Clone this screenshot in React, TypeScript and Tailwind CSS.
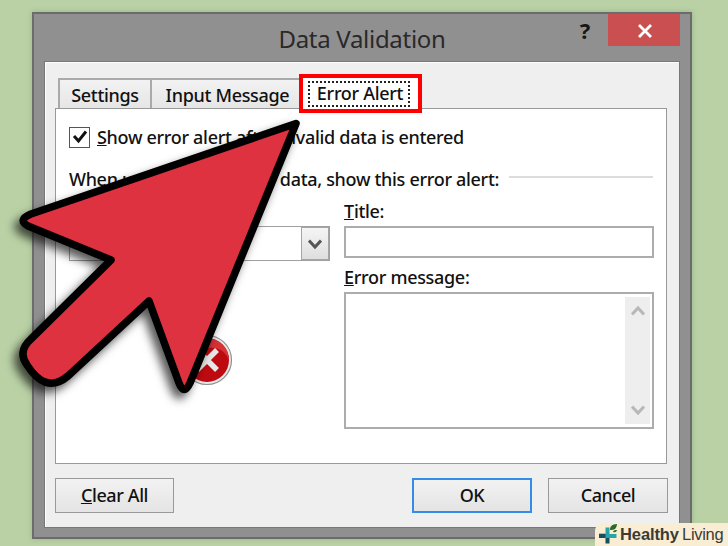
import type { ReactNode } from 'react';
import clsx from 'clsx';

function DialogButton({ children, primary, className }: { children: ReactNode; primary?: boolean; className?: string }) {
  return (
    <button
      className={clsx(
        'h-[35px] bg-linear-to-b from-[#f2f2f2] to-[#e4e4e4] pb-0.5 text-[18px] font-medium tracking-[-0.4px]',
        primary ? 'border-2 border-[#358ce8]' : 'border border-[#999]',
        className
      )}
    >
      {children}
    </button>
  );
}

function Chevron({ up, className }: { up?: boolean; className?: string }) {
  return (
    <svg viewBox="0 0 14 12" className={clsx('h-3 w-3.5', className)} fill="none" stroke="currentColor" strokeWidth="3">
      <path d={up ? 'M1 9.5 7 3l6 6.5' : 'M1 2.5 7 9l6-6.5'} />
    </svg>
  );
}

function StopIcon() {
  return (
    <svg viewBox="0 0 52 52" className="h-[52px] w-[52px]">
      <circle cx="26" cy="26" r="24.5" fill="#e9e9e9" stroke="#909090" strokeWidth="1.2" />
      <circle cx="26" cy="26" r="22" fill="#bd0a10" />
      <path d="M4 26a22 22 0 0 1 44 0q-6-14-22-12T4 26" fill="#d73238" />
      <path d="m16 16 20 20M36 16 16 36" stroke="#e8e8e8" strokeWidth="5.5" />
    </svg>
  );
}

function PointerArrow() {
  return (
    <svg viewBox="0 0 728 546" className="pointer-events-none absolute inset-0 h-[546px] w-[728px]">
      <defs>
        <filter id="shadow" x="-20%" y="-20%" width="140%" height="140%">
          <feDropShadow dx="-5" dy="6" stdDeviation="5" floodColor="#000" floodOpacity="0.65" />
        </filter>
      </defs>
      <path
        d="M296 123.500 31 214Q17 220 28 226L111 260 31 339C21 348 21 357 27 365C38 382 51 390 68 376L149 301 179 383Q184 396 190 383Z"
        fill="#df3040"
        stroke="#000"
        strokeWidth="7.5"
        strokeLinejoin="round"
        filter="url(#shadow)"
      />
    </svg>
  );
}

function Watermark() {
  return (
    <div className="absolute right-0 bottom-0 flex h-[23px] w-[133px] items-center rounded-tl-lg bg-[#f9edd4] pl-1 font-['Liberation_Sans',sans-serif] text-[16.5px] leading-none tracking-[-0.1px] whitespace-nowrap text-[#3c3a36]">
      <svg viewBox="0 0 20 22" className="-mt-0.5 h-[22px] w-5 shrink-0">
        <path d="M6.5 4.5h4v6.5H7L6.5 10z" fill="#27a5a9" />
        <path d="M0 10.5h6.5l4 .5h7v4h-7l-4 0H0z" fill="#27a5a9" />
        <path d="M0 11h6.5v4H0zM6.5 15h4v5.5h-4z" fill="#17505a" />
        <path d="M11 7c0-4 2-5.500 7-6-.5 5-2.500 6-7 6" fill="#296a28" />
        <path d="M14 9c1-2 2-2 4-2-.5 2-2 2.500-4 2" fill="#296a28" />
      </svg>
      <b className="ml-px w-[60px]">Healthy</b>
      <span className="ml-0.5 tracking-[-0.3px]">Living</span>
    </div>
  );
}

export default function App() {
  return (
    <div className="relative h-[546px] w-[728px] overflow-hidden bg-[#b9d1a5] pt-3 pl-8 font-['Noto_Sans','Open_Sans',sans-serif] text-[18px] leading-6 font-medium tracking-[-0.31px] text-[#111]">
      <div className="h-[527px] w-[660px] border-2 border-[#6c6c6c] bg-[#909090] px-2.5 shadow-[0_0_5px_rgba(70,90,60,0.25)]">
        {/* Title bar */}
        <div className="relative flex h-[47px] items-center justify-center pt-0.5">
          <h1 className="text-[24px] font-normal tracking-[-0.3px] whitespace-nowrap text-[#292929]">Data Validation</h1>
          <span className="absolute top-1 right-[90px] text-[22px] font-bold text-[#171717]">?</span>
          <button className="absolute top-0 right-0 flex h-8 w-[72px] items-center justify-center bg-[#c94f50] text-white">
            <svg viewBox="0 0 14 14" className="mt-px ml-0.5 h-3.5 w-3.5" stroke="currentColor" strokeWidth="2.8">
              <path d="m1 1 12 12M13 1 1 13" />
            </svg>
          </button>
        </div>

        <div className="h-[467px] w-[636px] border border-[#777] bg-[#efefef] pt-4 pl-2.5 shadow-[inset_1px_1px_white]">
          {/* Tabs */}
          <div className="relative flex h-[30px] pl-[3px]">
            <div className="w-[94px] border-2 border-b-0 border-[#aaa] bg-linear-to-b from-[#f2f2f2] to-[#e6e6e6] pt-[3px] text-center">Settings</div>
            <div className="w-[149px] border-t-2 border-[#aaa] bg-linear-to-b from-[#f2f2f2] to-[#e6e6e6] pt-[3px] pl-0.5 text-center">Input Message</div>
            <div className="absolute -top-1 left-[244px] z-10 h-[39px] w-[123px] border-[4.5px] border-[#fe0000] bg-white p-[3px]">
              <div className="ml-[2px] h-[26px] w-[102px] border-2 border-dotted border-[#222] pl-0.5 text-center leading-[21px] whitespace-nowrap">
                Error Alert
              </div>
            </div>
          </div>

          <div className="h-[356px] w-[612px] border border-[#999] bg-white px-[13px] pt-[16px]">
            <div className="flex items-center gap-[7px]">
              <div className="flex h-[21px] w-[21px] items-center justify-center border-[1.5px] border-[#555]">
                <svg viewBox="0 0 16 16" className="h-4 w-4" fill="none" stroke="#111" strokeWidth="3">
                  <path d="m2 7 4.500 5L14 2.500" />
                </svg>
              </div>
              <span className="whitespace-nowrap"><u>S</u>how error alert after invalid data is entered</span>
            </div>
            <div className="mt-[18px] flex items-center">
              <span className="w-[441px] whitespace-nowrap">When user enters invalid data, show this error alert:</span>
              <div className="-mt-1 h-[2px] w-[145px] bg-[#dcdcdc]" />
            </div>

            <div className="flex pt-[8px]">
              <div className="w-[275px]">
                <div>Style:</div>
                <div className="mt-[3px] flex h-[35px] w-[261px] border border-[#a0a0a0]">
                  <span className="flex-1 pl-2">Stop</span>
                  <div className="flex w-[28px] items-center justify-center border border-[#a5a5a5] bg-linear-to-b from-[#f5f5f5] to-[#dedede] text-[#555]">
                    <Chevron />
                  </div>
                </div>
                <div className="mt-[73px] ml-[112px]">
                  <StopIcon />
                </div>
              </div>
              <div className="w-[311px] translate-x-px">
                <div><u>T</u>itle:</div>
                <div className="mt-[3px] h-8 border-2 border-[#acacae]" />
                <div className="mt-[7px]"><u>E</u>rror message:</div>
                <div className="mt-[3px] flex h-[137px] justify-end border-2 border-[#acacae] py-[3px] pr-[2px]">
                  <div className="flex w-[25px] flex-col items-center justify-between bg-[#eee] py-2 text-[#b8b8b8]">
                    <Chevron up />
                    <Chevron />
                  </div>
                </div>
              </div>
            </div>
          </div>

          {/* Footer actions */}
          <div className="flex pt-[14px]">
            <DialogButton className="w-[119px]"><u>C</u>lear All</DialogButton>
            <DialogButton primary className="ml-[238px] w-[120px]">OK</DialogButton>
            <DialogButton className="ml-4 w-[120px]">Cancel</DialogButton>
          </div>
        </div>
      </div>
      <PointerArrow />
      <Watermark />
    </div>
  );
}
